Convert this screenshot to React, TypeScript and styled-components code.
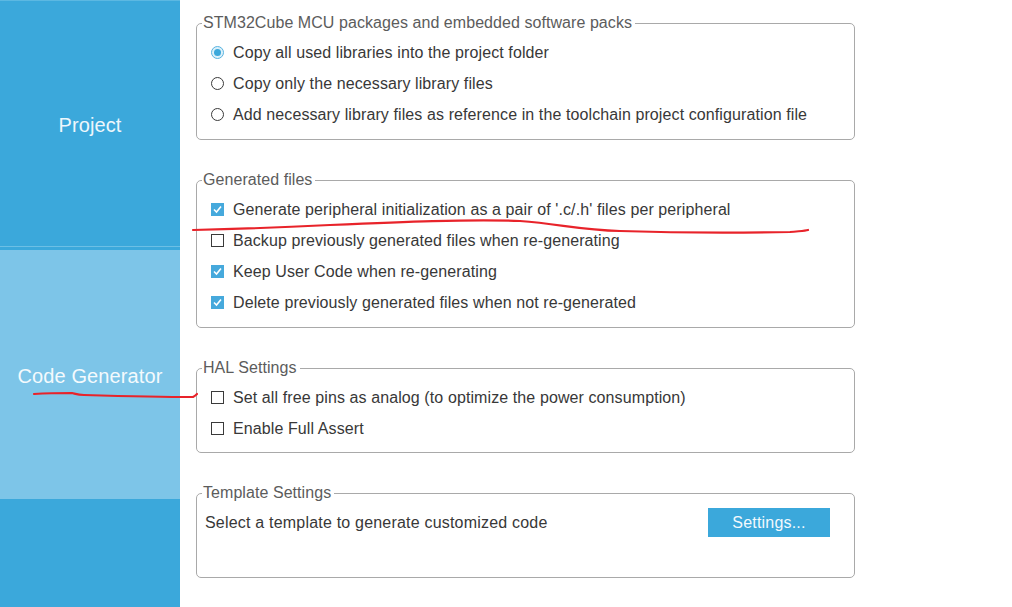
import React from "react";
import styled, { createGlobalStyle } from "styled-components";

const GlobalStyle = createGlobalStyle`
  html, body { margin: 0; padding: 0; background: #ffffff; }
  body { font-family: "Liberation Sans", Arial, sans-serif; }
`;

const Page = styled.div`
  position: relative;
  display: flex;
  width: 1012px;
  height: 607px;
  overflow: hidden;
  background: #ffffff;
`;

const Sidebar = styled.nav`
  width: 180px;
  flex: 0 0 180px;
  display: flex;
  flex-direction: column;
  background: #3ba8db;
`;

const NavItem = styled.div<{ $active?: boolean; $h: number }>`
  height: ${(p) => p.$h}px;
  box-sizing: border-box;
  display: flex;
  align-items: center;
  justify-content: center;
  padding-top: 3px;
  background: ${(p) => (p.$active ? "#7dc5e8" : "#3ba8db")};
  border-top: ${(p) => (p.$active ? "none" : "1px solid #5cb8e2")};
  color: ${(p) => (p.$active ? "#f4fafd" : "#eef7fc")};
  font-family: "Liberation Sans", Arial, sans-serif;
  font-size: 20px;
  font-weight: 400;
  letter-spacing: 0.1px;
`;

const NavGap = styled.div`
  height: 1px;
  background: #6cbfe5;
  margin-bottom: 3px;
`;

const NavFill = styled.div`
  flex: 1;
  background: #3ba8db;
`;

const Main = styled.main`
  flex: 1;
  display: flex;
  flex-direction: column;
  gap: 32px;
  padding: 15px 0 0 16px;
`;

const Group = styled.fieldset<{ $minH?: number; $pb?: number }>`
  margin: 0;
  width: 659px;
  box-sizing: border-box;
  border: 1px solid #a9a9a9;
  border-radius: 5px;
  padding: 0 0 ${(p) => p.$pb ?? 9}px 0;
  min-height: ${(p) => (p.$minH ? `${p.$minH}px` : "auto")};
  min-inline-size: 0;
`;

const Legend = styled.legend`
  margin-left: 5px;
  padding: 0 3px 0 1px;
  font-size: 16px;
  line-height: 16px;
  letter-spacing: 0.06px;
  color: #5c5c5c;
`;

const Rows = styled.div<{ $pl?: number; $pr?: number }>`
  display: flex;
  flex-direction: column;
  padding: 6px ${(p) => p.$pr ?? 0}px 0 ${(p) => p.$pl ?? 14}px;
`;

const Row = styled.label`
  height: 31px;
  display: flex;
  align-items: center;
  gap: 9px;
  font-size: 16px;
  letter-spacing: 0.1px;
  color: #383838;
  white-space: nowrap;
`;

const SplitRow = styled.div`
  height: 31px;
  display: flex;
  align-items: center;
  justify-content: space-between;
  font-size: 16px;
  letter-spacing: 0.2px;
  color: #383838;
`;

const Radio = styled.span<{ $on?: boolean }>`
  width: 13px;
  height: 13px;
  box-sizing: border-box;
  border-radius: 50%;
  flex: 0 0 13px;
  border: 1px solid ${(p) => (p.$on ? "#58b3e0" : "#3a3a3a")};
  background: ${(p) => (p.$on ? "#dcf0fa" : "#ffffff")};
  display: flex;
  align-items: center;
  justify-content: center;
  &::after {
    content: "";
    display: ${(p) => (p.$on ? "block" : "none")};
    width: 7px;
    height: 7px;
    border-radius: 50%;
    background: #3ba8db;
  }
`;

const Box = styled.span<{ $on?: boolean }>`
  width: 13px;
  height: 13px;
  flex: 0 0 13px;
  box-sizing: border-box;
  border: 1px solid ${(p) => (p.$on ? "#46a9dc" : "#3a3a3a")};
  background: ${(p) => (p.$on ? "#46a9dc" : "#ffffff")};
  display: flex;
  align-items: center;
  justify-content: center;
`;

const Button = styled.button`
  width: 122px;
  height: 29px;
  border: none;
  background: #3ba8db;
  color: #f2f9fd;
  font-family: "Liberation Sans", Arial, sans-serif;
  font-size: 16px;
  letter-spacing: 0.2px;
  padding: 0;
  margin-right: 24px;
`;

const Annotation = styled.svg`
  position: absolute;
  left: 0;
  top: 0;
  pointer-events: none;
`;

function Check({ on }: { on?: boolean }) {
  return (
    <Box $on={on}>
      {on && (
        <svg width="11" height="11" viewBox="0 0 11 11">
          <polyline points="2,5.5 4.5,8 9,2.5" fill="none" stroke="#ffffff" strokeWidth="1.6" />
        </svg>
      )}
    </Box>
  );
}

export default function App() {
  return (
    <Page>
      <GlobalStyle />
      <Sidebar>
        <NavItem $h={246}>Project</NavItem>
        <NavGap />
        <NavItem $active $h={249}>Code Generator</NavItem>
        <NavFill />
      </Sidebar>
      <Main>
        <Group>
          <Legend>STM32Cube MCU packages and embedded software packs</Legend>
          <Rows>
            <Row><Radio $on />Copy all used libraries into the project folder</Row>
            <Row><Radio />Copy only the necessary library files</Row>
            <Row><Radio />Add necessary library files as reference in the toolchain project configuration file</Row>
          </Rows>
        </Group>
        <Group>
          <Legend>Generated files</Legend>
          <Rows>
            <Row><Check on />Generate peripheral initialization as a pair of '.c/.h' files per peripheral</Row>
            <Row><Check />Backup previously generated files when re-generating</Row>
            <Row><Check on />Keep User Code when re-generating</Row>
            <Row><Check on />Delete previously generated files when not re-generated</Row>
          </Rows>
        </Group>
        <Group $pb={8}>
          <Legend>HAL Settings</Legend>
          <Rows>
            <Row><Check />Set all free pins as analog (to optimize the power consumption)</Row>
            <Row><Check />Enable Full Assert</Row>
          </Rows>
        </Group>
        <Group $minH={93}>
          <Legend>Template Settings</Legend>
          <Rows $pl={8}>
            <SplitRow>
              <span>Select a template to generate customized code</span>
              <Button>Settings...</Button>
            </SplitRow>
          </Rows>
        </Group>
      </Main>
      <Annotation width="1012" height="607" viewBox="0 0 1012 607">
        <path
          d="M193,230 C240,229 290,227 330,225 C400,222 470,219 520,221 C560,224 580,230 620,231 C680,233 740,233 790,232 C800,231 805,231 808,230"
          fill="none"
          stroke="#e8232a"
          strokeWidth="2.2"
          strokeLinecap="round"
        />
        <path
          d="M34,394 C50,393 65,393 72,393 C76,394 78,395 84,395 C120,396 160,397 193,397 C195,396 196,395 197,394"
          fill="none"
          stroke="#e8232a"
          strokeWidth="2.2"
          strokeLinecap="round"
        />
      </Annotation>
    </Page>
  );
}
